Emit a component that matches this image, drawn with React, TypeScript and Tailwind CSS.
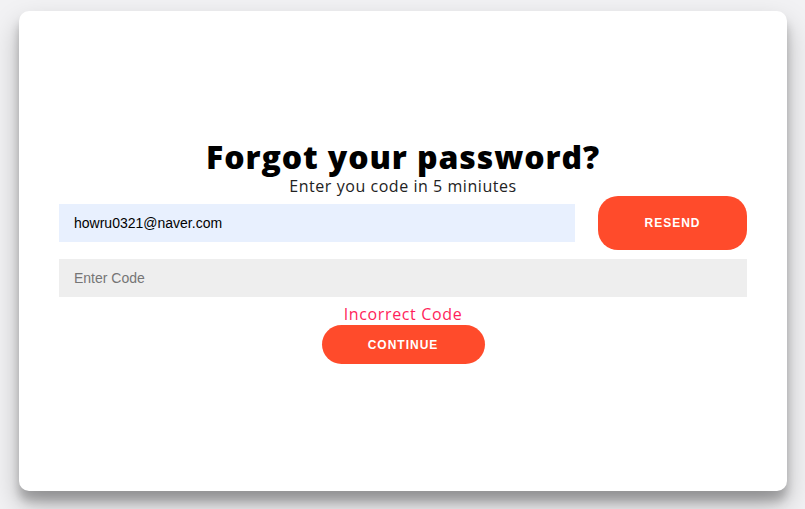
import React from 'react';

const headingFont = { fontFamily: '"Open Sans", "Noto Sans", sans-serif' };

export default function App() {
  return (
    <div className="w-[805px] h-[509px] bg-[#f2f2f4] pt-[11px] pl-[19px]">
      <div
        className="w-[768px] h-[480px] bg-white rounded-[10px] shadow-[0_14px_28px_rgba(0,0,0,0.25),0_10px_10px_rgba(0,0,0,0.22)] flex flex-col items-center justify-center px-[40px]"
        style={headingFont}
      >
        <h1 className="text-[32px] leading-[38px] font-extrabold tracking-[0.9px] text-black m-0">Forgot your password?</h1>
        <p className="text-[16px] leading-[20px] tracking-[0.55px] text-[#222]">Enter you code in 5 miniutes</p>

        <div className="w-full flex items-center gap-[23px] h-[54px]">
          <input
            readOnly
            value="howru0321@naver.com"
            className="flex-1 h-[38px] bg-[#e8f0fe] px-[15px] text-[14px] text-black outline-none font-['Liberation_Sans',Arial,sans-serif]"
          />
          <button className="w-[149px] h-[54px] rounded-[20px] bg-[#ff4b2b] text-white text-[12px] font-bold tracking-[1px] font-['Liberation_Sans',Arial,sans-serif]">
            RESEND
          </button>
        </div>

        <input
          placeholder="Enter Code"
          className="w-full mt-[9px] h-[38px] bg-[#eeeeee] px-[15px] text-[14px] outline-none placeholder:text-[#757575] font-['Liberation_Sans',Arial,sans-serif]"
        />

        <p className="mt-[7px] text-[16px] leading-[20px] tracking-[0.65px] text-[#ff1f5a]">Incorrect Code</p>

        <button className="mt-[1px] h-[39px] w-[163px] rounded-full bg-[#ff4b2b] text-white text-[12px] font-bold tracking-[1px] font-['Liberation_Sans',Arial,sans-serif]">
          CONTINUE
        </button>
      </div>
    </div>
  );
}
